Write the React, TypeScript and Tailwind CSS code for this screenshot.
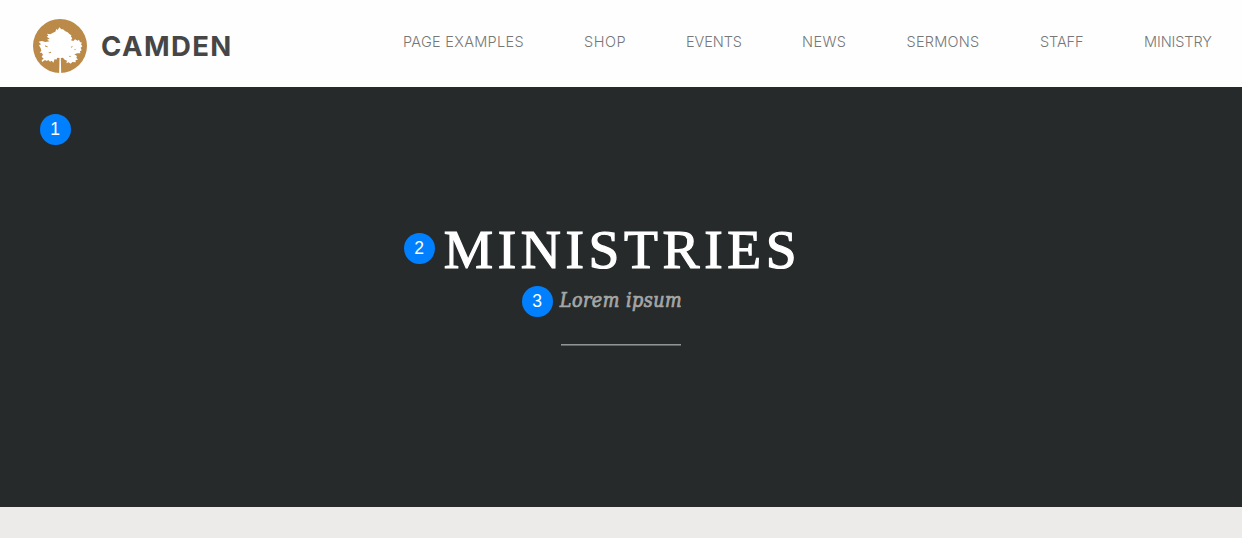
const navItems = [
  { label: "PAGE EXAMPLES", style: "w-[121px] tracking-[0.3px]" },
  { label: "SHOP", style: "w-[42px] tracking-[0.5px]" },
  { label: "EVENTS", style: "w-[56px] tracking-[-0.1px]" },
  { label: "NEWS", style: "w-[44.5px] tracking-[0.4px]" },
  { label: "SERMONS", style: "w-[73.5px] tracking-[0.25px]" },
  { label: "STAFF", style: "w-[44px] tracking-[-0.1px]" },
  { label: "MINISTRY", style: "w-[68px] tracking-[-0.1px]" },
];

function TreeLogo() {
  return (
    <svg className="size-[54px] shrink-0" viewBox="24 27 162 162" aria-hidden="true">
      <circle cx="105" cy="108" r="81" fill="#bb8a48" />
      <path
        fill="#fff"
        d="M102.500 189 L103.500 144 L97 143 L94 149 L89 147 L85 158 L80 152 L75 155 L70 150 L65 153 L60 150 L51 156 L50 151 L56 146 L50 140 L54 134 L50 128 L44 128 L49 122 L47 115 L42 106 L48 103 L41 95 L51 93 L61 96 L74 94 L66 89 L74 86 L65 80 L70 77 L66 71 L76 73 L84 68 L91 65 L94 57 L98 60 L103 52 L109 58 L114 58 L121 64 L128 67 L133 72 L139 76 L138 80 L142 85 L138 91 L145 93 L150 88 L158 92 L162 89 L165 96 L171 98 L168 103 L172 109 L167 113 L170 121 L165 124 L166 130 L157 130 L148 133 L156 138 L154 143 L159 149 L152 150 L152 157 L142 156 L137 161 L131 157 L124 160 L126 152 L119 149 L114 143 L107.500 144 L108.500 189 Z"
      />
      <path
        fill="#bb8a48"
        d="M60 106l7 3 2 3-8-2zM70 128l7-3 2 3-7 2zM137 111l7-4-4 6zM147 119l7-3-4 5zM132 137l7 2-5 2z"
      />
    </svg>
  );
}

function Marker({ n, className }: { n: number; className: string }) {
  return (
    <span
      className={`absolute flex size-[31px] items-center justify-center rounded-full bg-[#0080ff] pr-px font-['Liberation_Sans',sans-serif] text-[17.5px] leading-none text-white ${className}`}
    >
      {n}
    </span>
  );
}

export default function App() {
  return (
    <div className="flex h-[538px] w-full flex-col overflow-hidden bg-[#edebe9]">
      <header className="flex h-[87px] shrink-0 items-start justify-between bg-[#fefefe] pl-[33px] pr-[30px]">
        <a className="flex items-center pt-[19px]">
          <TreeLogo />
          <span className="ml-[14px] font-['Inter',sans-serif] text-[27.5px] font-bold leading-[54px] tracking-[1.4px] text-[#464646]">
            CAMDEN
          </span>
        </a>
        <nav className="flex gap-[60px] pt-[32px] font-['Inter',sans-serif] text-[14.5px] font-light leading-5 text-[#777]">
          {navItems.map((item) => (
            <a key={item.label} className={`shrink-0 whitespace-nowrap ${item.style}`}>
              {item.label}
            </a>
          ))}
        </nav>
      </header>
      <main className="relative flex h-[420px] shrink-0 flex-col items-center bg-[#262a2b] pt-[131px]">
        <Marker n={1} className="left-[40px] top-[27px]" />
        <h1 className="whitespace-nowrap pl-[3px] font-['Liberation_Serif',serif] text-[55.5px] leading-[64px] tracking-[4.6px] text-white [-webkit-text-stroke:1.2px_white]">
          MINISTRIES
        </h1>
        <Marker n={2} className="left-[404px] top-[146px]" />
        <p className="whitespace-nowrap font-['DejaVu_Serif_Condensed','DejaVu_Serif',serif] text-[19.5px] italic leading-[38px] tracking-[0.5px] text-[#a5a6a6] [-webkit-text-stroke:0.7px_#a5a6a6]">
          Lorem ipsum
        </p>
        <Marker n={3} className="left-[522px] top-[199px]" />
        <div className="mt-[24px] h-[2px] w-[120px] border-b border-[#626565] bg-[#929494]" />
      </main>
    </div>
  );
}
